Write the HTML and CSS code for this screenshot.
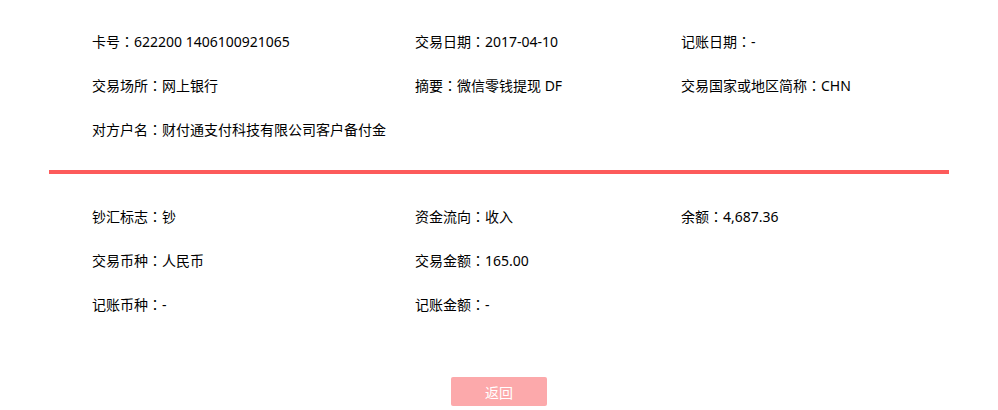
FILE: index.html
```html
<!DOCTYPE html>
<html lang="zh-CN">
<head>
    <meta charset="UTF-8">
    <title>交易详情</title>
    <link rel="stylesheet" href="styles.css">
</head>
<body>
    <div class="detail">
        <ul class="info-list top">
            <li>卡号<span class="colon">：</span>622200 1406100921065</li>
            <li>交易日期<span class="colon">：</span>2017-04-10</li>
            <li>记账日期<span class="colon">：</span>-</li>
            <li>交易场所<span class="colon">：</span>网上银行</li>
            <li>摘要<span class="colon">：</span>微信零钱提现 DF</li>
            <li>交易国家或地区简称<span class="colon">：</span>CHN</li>
            <li class="full">对方户名<span class="colon">：</span>财付通支付科技有限公司客户备付金</li>
        </ul>
        <div class="divider"></div>
        <ul class="info-list bottom">
            <li>钞汇标志<span class="colon">：</span>钞</li>
            <li>资金流向<span class="colon">：</span>收入</li>
            <li>余额<span class="colon">：</span>4,687.36</li>
            <li>交易币种<span class="colon">：</span>人民币</li>
            <li>交易金额<span class="colon">：</span>165.00</li>
            <li></li>
            <li>记账币种<span class="colon">：</span>-</li>
            <li>记账金额<span class="colon">：</span>-</li>
            <li></li>
        </ul>
        <div class="actions">
            <button class="back-btn" onclick="history.back()">返回</button>
        </div>
    </div>
</body>
</html>
```

FILE: styles.css
```css
body {
    margin: 0;
    font-family: "Noto Sans", "Noto Sans CJK SC", sans-serif;
    font-size: 14px;
    color: #000;
    background: #fff;
}
.detail {
    width: 900px;
    margin: 0 auto;
}
.info-list {
    list-style: none;
    margin: 0;
    padding: 0 0 0 43px;
    display: grid;
    grid-template-columns: 323px 266px 1fr;
}
.info-list li {
    height: 44px;
    line-height: 44px;
    white-space: nowrap;
}
.info-list .full {
    grid-column: 1 / -1;
}
.colon {
    font-family: "Noto Sans CJK TC", "Noto Sans CJK SC", sans-serif;
    font-feature-settings: "locl" 0;
}
.top {
    padding-top: 19px;
    padding-bottom: 19px;
}
.bottom {
    padding-top: 20px;
}
.divider {
    height: 4px;
    background-color: #fd5b5b;
}
.actions {
    display: flex;
    justify-content: center;
    padding-top: 51px;
}
.back-btn {
    width: 96px;
    height: 29px;
    border: none;
    border-radius: 2px;
    background-color: #fca9ab;
    color: #fff;
    font-family: "Noto Sans CJK SC", sans-serif;
    font-size: 14px;
    cursor: pointer;
}
```
